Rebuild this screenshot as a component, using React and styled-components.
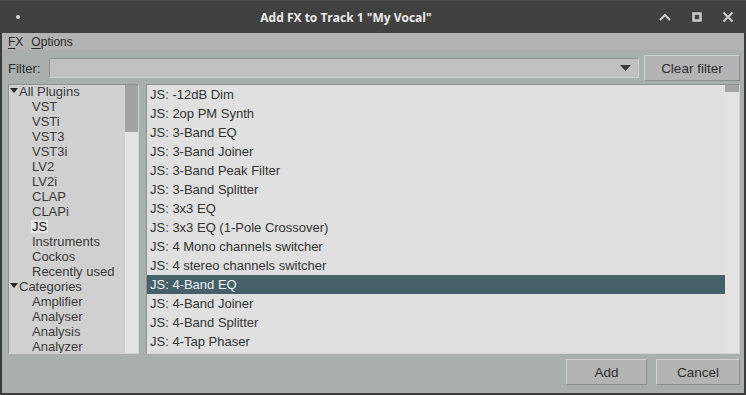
import React from "react";
import styled, { createGlobalStyle } from "styled-components";

const plugins = [
  "JS: -12dB Dim",
  "JS: 2op PM Synth",
  "JS: 3-Band EQ",
  "JS: 3-Band Joiner",
  "JS: 3-Band Peak Filter",
  "JS: 3-Band Splitter",
  "JS: 3x3 EQ",
  "JS: 3x3 EQ (1-Pole Crossover)",
  "JS: 4 Mono channels switcher",
  "JS: 4 stereo channels switcher",
  "JS: 4-Band EQ",
  "JS: 4-Band Joiner",
  "JS: 4-Band Splitter",
  "JS: 4-Tap Phaser",
];

const tree = [
  { label: "All Plugins", root: true },
  { label: "VST" },
  { label: "VSTi" },
  { label: "VST3" },
  { label: "VST3i" },
  { label: "LV2" },
  { label: "LV2i" },
  { label: "CLAP" },
  { label: "CLAPi" },
  { label: "JS", active: true },
  { label: "Instruments" },
  { label: "Cockos" },
  { label: "Recently used" },
  { label: "Categories", root: true },
  { label: "Amplifier" },
  { label: "Analyser" },
  { label: "Analysis" },
  { label: "Analyzer" },
];

function App() {
  return (
    <>
      <GlobalStyle />
      <Window>
        <TitleBar>
          <Dot />
          <Title>Add FX to Track 1 "My Vocal"</Title>
          <WinControls>
            <svg width="14" height="10" viewBox="0 0 14 10">
              <path d="M2 8 L7 3 L12 8" fill="none" stroke="#cfcfcf" strokeWidth="2" />
            </svg>
            <svg width="10" height="10" viewBox="0 0 10 10">
              <rect x="1.5" y="1.5" width="7" height="7" fill="none" stroke="#cfcfcf" strokeWidth="2.4" />
            </svg>
            <svg width="12" height="12" viewBox="0 0 12 12">
              <path d="M1.5 1.5 L10.5 10.5 M10.5 1.5 L1.5 10.5" stroke="#cfcfcf" strokeWidth="2" />
            </svg>
          </WinControls>
        </TitleBar>
        <Body>
          <MenuBar>
            <MenuItem><u>F</u>X</MenuItem>
            <MenuItem><u>O</u>ptions</MenuItem>
          </MenuBar>
          <Content>
            <FilterRow>
              <FilterLabel>Filter:</FilterLabel>
              <Combo>
                <svg width="11" height="6" viewBox="0 0 11 6">
                  <path d="M0 0 L11 0 L5.5 6 Z" fill="#3a3a3a" />
                </svg>
              </Combo>
              <Button $w={97} $h={26}>Clear filter</Button>
            </FilterRow>
            <Panels>
              <TreePanel>
                <TreeList>
                  {tree.map((t) => (
                    <TreeItem key={t.label} $root={t.root}>
                      {t.root && <Caret />}
                      <TreeText $active={t.active}>{t.label}</TreeText>
                    </TreeItem>
                  ))}
                </TreeList>
                <ScrollTrack $w={13}>
                  <Thumb $h={47} />
                </ScrollTrack>
              </TreePanel>
              <ListPanel>
                <Rows>
                  {plugins.map((p) => (
                    <Row key={p} $selected={p === "JS: 4-Band EQ"}>{p}</Row>
                  ))}
                </Rows>
                <ScrollTrack $w={14}>
                  <Thumb $h={7} />
                </ScrollTrack>
              </ListPanel>
            </Panels>
            <Footer>
              <Button $w={81} $h={26}>Add</Button>
              <Button $w={84} $h={26}>Cancel</Button>
            </Footer>
          </Content>
        </Body>
      </Window>
    </>
  );
}

export default App;

const GlobalStyle = createGlobalStyle`
  body {
    margin: 0;
    background: #3a3a3a;
    font-family: "Liberation Sans", Arial, sans-serif;
  }
`;

const Window = styled.div`
  width: 746px;
  height: 395px;
  background: #3b3b3b;
  display: flex;
  flex-direction: column;
  overflow: hidden;
`;

const TitleBar = styled.div`
  height: 33px;
  background: #414141;
  border-top: 1px solid #4a4a4a;
  box-sizing: border-box;
  display: flex;
  align-items: center;
`;

const Dot = styled.div`
  width: 4px;
  height: 4px;
  border-radius: 50%;
  background: #d8d8d8;
  margin-left: 16px;
`;

const Title = styled.div`
  flex: 1;
  text-align: center;
  font-family: "Open Sans", "Noto Sans", sans-serif;
  font-weight: 700;
  font-size: 12px;
  color: #ececec;
  margin-left: 14px;
`;

const WinControls = styled.div`
  display: flex;
  align-items: center;
  gap: 20px;
  margin-right: 12px;
  svg {
    display: block;
  }
`;

const Body = styled.div`
  flex: 1;
  margin: 0 2px 2px 2px;
  display: flex;
  flex-direction: column;
  background: #a9afad;
`;

const MenuBar = styled.div`
  height: 17px;
  background: #b3b3b3;
  display: flex;
  align-items: center;
  gap: 8px;
  padding-left: 6px;
  font-size: 12px;
  color: #2a2a2a;
`;

const MenuItem = styled.span`
  u {
    text-decoration-thickness: 1px;
    text-underline-offset: 2px;
  }
`;

const Content = styled.div`
  flex: 1;
  display: flex;
  flex-direction: column;
  padding: 5px 4px 0 6px;
`;

const FilterRow = styled.div`
  display: flex;
  align-items: center;
  height: 26px;
`;

const FilterLabel = styled.span`
  font-size: 13px;
  color: #2e2e2e;
  width: 41px;
`;

const Combo = styled.div`
  width: 586px;
  height: 18px;
  background: #c0c0c0;
  border: 1px solid #8f9492;
  border-right-color: #d0d0d0;
  border-bottom-color: #d0d0d0;
  display: flex;
  align-items: center;
  justify-content: flex-end;
  padding-right: 7px;
  box-sizing: content-box;
  margin-right: 5px;
  svg {
    display: block;
    margin-left: auto;
  }
`;

const Button = styled.div`
  width: ${(p) => p.$w}px;
  height: ${(p) => p.$h}px;
  box-sizing: border-box;
  background: #b4b4b4;
  border: 1px solid #d2d2d2;
  border-right-color: #8a8e8d;
  border-bottom-color: #8a8e8d;
  display: flex;
  align-items: center;
  justify-content: center;
  font-size: 13.5px;
  color: #2e2e2e;
`;

const Panels = styled.div`
  display: flex;
  gap: 7px;
  margin-top: 3px;
  height: 270px;
`;

const TreePanel = styled.div`
  width: 131px;
  display: flex;
  border: 1px solid #cfd3d2;
  border-top-color: #8c9290;
  border-left-color: #8c9290;
  box-sizing: border-box;
  background: #d0d0d0;
  overflow: hidden;
`;

const TreeList = styled.div`
  flex: 1;
  display: flex;
  flex-direction: column;
  margin-top: -1px;
`;

const TreeItem = styled.div`
  height: 15px;
  flex-shrink: 0;
  display: flex;
  align-items: center;
  padding-left: ${(p) => (p.$root ? 1 : 22)}px;
  font-size: 13px;
  color: #3a3a3a;
  white-space: nowrap;
`;

const Caret = styled.span`
  width: 0;
  height: 0;
  border-left: 4px solid transparent;
  border-right: 4px solid transparent;
  border-top: 5px solid #222;
  margin-top: -2px;
`;

const TreeText = styled.span`
  padding: 0 1px;
  background: ${(p) => (p.$active ? "#e6e6e6" : "transparent")};
  color: ${(p) => (p.$active ? "#111" : "#3a3a3a")};
  line-height: 13px;
`;

const ScrollTrack = styled.div`
  width: ${(p) => p.$w}px;
  flex-shrink: 0;
  background: #e2e3e2;
  display: flex;
  flex-direction: column;
`;

const Thumb = styled.div`
  height: ${(p) => p.$h}px;
  background: #a2a4a3;
`;

const ListPanel = styled.div`
  flex: 1;
  display: flex;
  border: 1px solid #cfd3d2;
  border-top-color: #8c9290;
  border-left-color: #8c9290;
  box-sizing: border-box;
  background: #dfe0df;
`;

const Rows = styled.div`
  flex: 1;
  overflow: hidden;
`;

const Row = styled.div`
  height: 19px;
  line-height: 19px;
  padding-left: 3px;
  font-size: 13px;
  white-space: nowrap;
  background: ${(p) => (p.$selected ? "#46606a" : "transparent")};
  color: ${(p) => (p.$selected ? "#eef2f2" : "#333")};
`;

const Footer = styled.div`
  display: flex;
  justify-content: flex-end;
  gap: 9px;
  margin-top: 5px;
`;
